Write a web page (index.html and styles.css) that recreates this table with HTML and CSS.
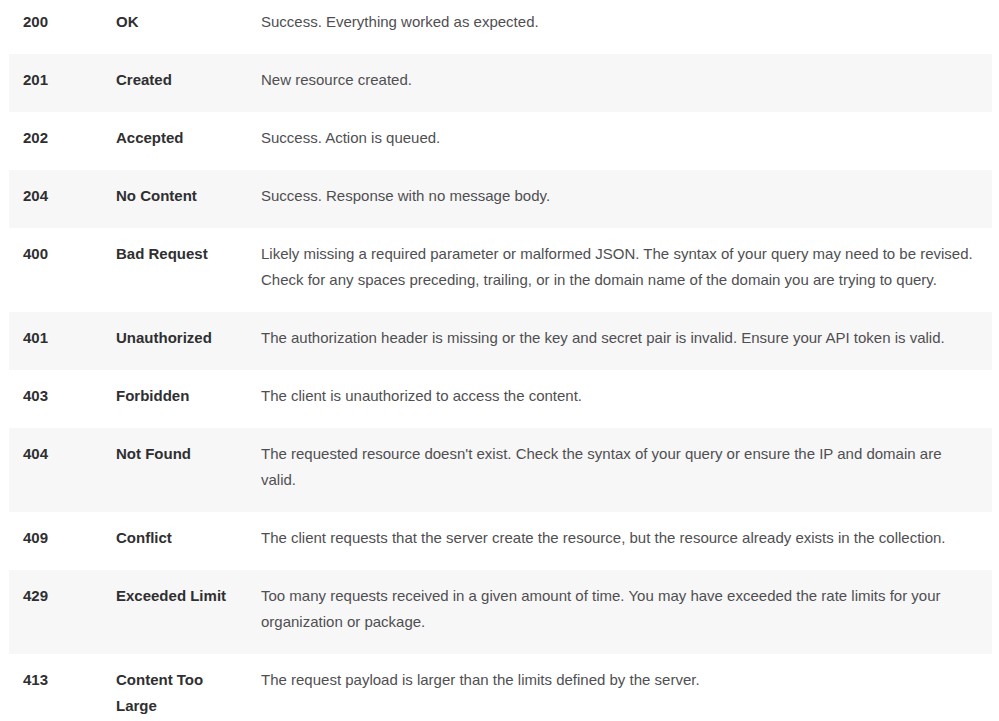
FILE: index.html
```html
<!DOCTYPE html>
<html>
<head>
<meta charset="utf-8">
<link rel="stylesheet" href="styles.css">
</head>
<body>
<table class="codes">
<tbody>
<tr><td class="code">200</td><td class="name">OK</td><td class="desc">Success. Everything worked as expected.</td></tr>
<tr><td class="code">201</td><td class="name">Created</td><td class="desc">New resource created.</td></tr>
<tr><td class="code">202</td><td class="name">Accepted</td><td class="desc">Success. Action is queued.</td></tr>
<tr><td class="code">204</td><td class="name">No Content</td><td class="desc">Success. Response with no message body.</td></tr>
<tr><td class="code">400</td><td class="name">Bad Request</td><td class="desc">Likely missing a required parameter or malformed JSON. The syntax of your query may need to be revised. Check for any spaces preceding, trailing, or in the domain name of the domain you are trying to query.</td></tr>
<tr><td class="code">401</td><td class="name">Unauthorized</td><td class="desc">The authorization header is missing or the key and secret pair is invalid. Ensure your API token is valid.</td></tr>
<tr><td class="code">403</td><td class="name">Forbidden</td><td class="desc">The client is unauthorized to access the content.</td></tr>
<tr><td class="code">404</td><td class="name">Not Found</td><td class="desc">The requested resource doesn't exist. Check the syntax of your query or ensure the IP and domain are valid.</td></tr>
<tr><td class="code">409</td><td class="name">Conflict</td><td class="desc">The client requests that the server create the resource, but the resource already exists in the collection.</td></tr>
<tr><td class="code">429</td><td class="name">Exceeded Limit</td><td class="desc">Too many requests received in a given amount of time. You may have exceeded the rate limits for your organization or package.</td></tr>
<tr><td class="code">413</td><td class="name">Content Too Large</td><td class="desc">The request payload is larger than the limits defined by the server.</td></tr>
</tbody>
</table>
</body>
</html>
```

FILE: styles.css
```css
html, body {
  margin: 0;
  padding: 0;
  background: #ffffff;
}
body {
  font-family: "Liberation Sans", Arial, sans-serif;
  font-size: 15px;
  line-height: 26px;
  color: #4f4f52;
}
.codes {
  margin: -4px 0 0 9px;
  width: 983px;
  border-collapse: collapse;
  table-layout: fixed;
}
.codes tr:nth-child(even) {
  background: #f7f7f7;
}
.codes td {
  padding: 13px 14px 19px;
  vertical-align: top;
}
.code {
  width: 65px;
  font-weight: bold;
  color: #2f2f31;
}
.name {
  width: 117px;
  font-weight: bold;
  color: #2f2f31;
}
.desc {
  color: #4f4f52;
}
```
